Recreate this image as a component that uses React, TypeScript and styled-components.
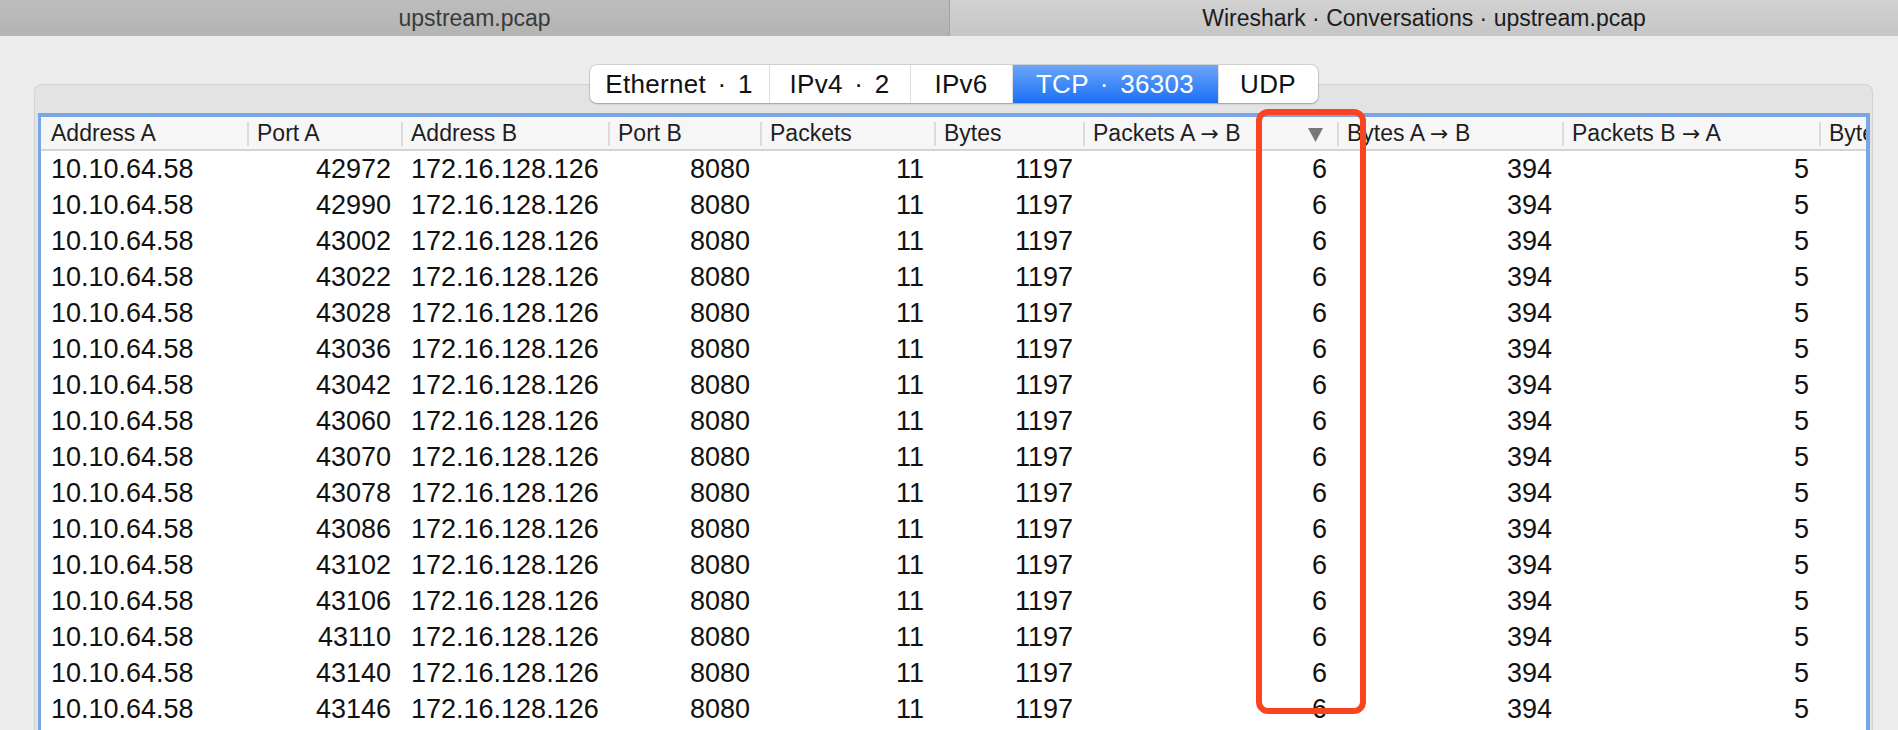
import React from 'react';
import styled, { createGlobalStyle } from 'styled-components';

const GlobalStyle = createGlobalStyle`
  html, body {
    margin: 0;
    padding: 0;
    background: #ececec;
    overflow: hidden;
  }
  body {
    font-family: "Liberation Sans", Arial, sans-serif;
  }
`;

const Window = styled.div`
  width: 1898px;
  height: 730px;
  display: flex;
  flex-direction: column;
  overflow: hidden;
  background: #ececec;
`;

const TabBar = styled.div`
  flex: none;
  height: 36px;
  display: grid;
  grid-template-columns: 1fr 1fr;
`;

const WindowTab = styled.div<{ $active?: boolean }>`
  display: flex;
  align-items: center;
  justify-content: center;
  font-size: 23px;
  color: ${(p) => (p.$active ? '#1c1c1c' : '#3a3a3a')};
  background: ${(p) =>
    p.$active ? 'linear-gradient(#d1d1d1, #c6c6c6)' : 'linear-gradient(#bdbdbd, #b3b3b3)'};
  & + & {
    border-left: 1px solid #a2a2a2;
  }
`;

const Body = styled.div`
  flex: 1;
  min-height: 0;
  display: flex;
  flex-direction: column;
  padding: 29px 25px 0 34px;
`;

const SegmentRow = styled.div`
  flex: none;
  display: flex;
  justify-content: center;
  position: relative;
  z-index: 1;
  margin-bottom: -19px;
`;

const Segmented = styled.div`
  display: flex;
  height: 38px;
  background: #fff;
  border-radius: 7px;
  overflow: hidden;
  box-shadow: 0 0 0 1px rgba(0, 0, 0, 0.1), 0 1px 2px rgba(0, 0, 0, 0.22);
`;

const Segment = styled.div<{ $w: number; $selected?: boolean }>`
  width: ${(p) => p.$w}px;
  display: flex;
  align-items: center;
  justify-content: center;
  font-size: 26px;
  letter-spacing: 0.3px;
  word-spacing: 4px;
  white-space: nowrap;
  color: ${(p) => (p.$selected ? '#fff' : '#111')};
  background: ${(p) => (p.$selected ? 'linear-gradient(#6ba6f9, #1b6ff5)' : 'transparent')};
  & + & {
    border-left: 1px solid #dedede;
  }
`;

const GroupBox = styled.div`
  flex: 1;
  min-height: 0;
  position: relative;
  display: flex;
  flex-direction: column;
  background: #e3e3e3;
  border: 1px solid #d2d2d2;
  border-bottom: none;
  border-radius: 8px 8px 0 0;
  padding: 28px 2px 0 3px;
`;

const TableFrame = styled.div`
  flex: 1;
  min-height: 0;
  background: #fff;
  border: solid #7ba6e6;
  border-width: 4px 4px 0 3px;
  overflow: hidden;
`;

const GRID = '206px 154px 207px 152px 174px 149px 254px 225px 257px 220px';

const HeaderRow = styled.div`
  display: grid;
  grid-template-columns: ${GRID};
  width: max-content;
  height: 32px;
  background: #f6f6f6;
  border-bottom: 2px solid #d4d4d4;
`;

const HeadCell = styled.div`
  position: relative;
  display: flex;
  align-items: center;
  justify-content: space-between;
  padding: 0 14px 0 10px;
  font-size: 23px;
  color: #1e1e1e;
  white-space: nowrap;
  overflow: hidden;
  & + &::before {
    content: '';
    position: absolute;
    left: 0;
    top: 5px;
    bottom: 3px;
    width: 2px;
    background: #dadada;
  }
`;

const ArrowGlyph = styled.span`
  font-family: "DejaVu Sans", sans-serif;
  font-size: 22px;
`;

const SortArrow = styled.svg`
  flex: none;
  width: 15px;
  height: 14px;
  margin-top: 4px;
`;

const DataRow = styled.div`
  display: grid;
  grid-template-columns: ${GRID};
  width: max-content;
  height: 36px;
`;

const Cell = styled.div<{ $align: 'left' | 'right' }>`
  display: flex;
  align-items: center;
  justify-content: ${(p) => (p.$align === 'right' ? 'flex-end' : 'flex-start')};
  padding: 0 10px;
  font-size: 27px;
  color: #111;
  white-space: nowrap;
  overflow: hidden;
`;

const Highlight = styled.div`
  position: absolute;
  left: 1221px;
  top: 24px;
  width: 110px;
  height: 605px;
  box-sizing: border-box;
  border: 6px solid #f8451f;
  border-radius: 12px;
  z-index: 2;
  pointer-events: none;
`;

type Col = { title: string; align: 'left' | 'right'; sorted?: boolean };

const columns: Col[] = [
  { title: 'Address A', align: 'left' },
  { title: 'Port A', align: 'right' },
  { title: 'Address B', align: 'left' },
  { title: 'Port B', align: 'right' },
  { title: 'Packets', align: 'right' },
  { title: 'Bytes', align: 'right' },
  { title: 'Packets A → B', align: 'right', sorted: true },
  { title: 'Bytes A → B', align: 'right' },
  { title: 'Packets B → A', align: 'right' },
  { title: 'Bytes B → A', align: 'right' },
];

const ports = [
  42972, 42990, 43002, 43022, 43028, 43036, 43042, 43060, 43070, 43078, 43086, 43102, 43106,
  43110, 43140, 43146,
];

const rows = ports.map((p) => [
  '10.10.64.58',
  String(p),
  '172.16.128.126',
  '8080',
  '11',
  '1197',
  '6',
  '394',
  '5',
  '803',
]);

const segments = [
  { label: 'Ethernet · 1', w: 179 },
  { label: 'IPv4 · 2', w: 140 },
  { label: 'IPv6', w: 101 },
  { label: 'TCP · 36303', w: 205, selected: true },
  { label: 'UDP', w: 99 },
];

function HeaderTitle({ text }: { text: string }) {
  const parts = text.split('→');
  return (
    <span>
      {parts.map((part, i) => (
        <React.Fragment key={i}>
          {i > 0 && <ArrowGlyph>→</ArrowGlyph>}
          {part}
        </React.Fragment>
      ))}
    </span>
  );
}

export default function App() {
  return (
    <Window>
      <GlobalStyle />
      <TabBar>
        <WindowTab>upstream.pcap</WindowTab>
        <WindowTab $active>Wireshark · Conversations · upstream.pcap</WindowTab>
      </TabBar>
      <Body>
        <SegmentRow>
          <Segmented>
            {segments.map((s) => (
              <Segment key={s.label} $w={s.w} $selected={s.selected}>
                {s.label}
              </Segment>
            ))}
          </Segmented>
        </SegmentRow>
        <GroupBox>
          <TableFrame>
            <HeaderRow>
              {columns.map((c) => (
                <HeadCell key={c.title}>
                  <HeaderTitle text={c.title} />
                  {c.sorted && (
                    <SortArrow viewBox="0 0 15 14">
                      <path d="M0 0 H15 L7.5 14 Z" fill="#777" />
                    </SortArrow>
                  )}
                </HeadCell>
              ))}
            </HeaderRow>
            {rows.map((r, i) => (
              <DataRow key={i}>
                {r.map((v, j) => (
                  <Cell key={j} $align={columns[j].align}>
                    {v}
                  </Cell>
                ))}
              </DataRow>
            ))}
          </TableFrame>
          <Highlight />
        </GroupBox>
      </Body>
    </Window>
  );
}
